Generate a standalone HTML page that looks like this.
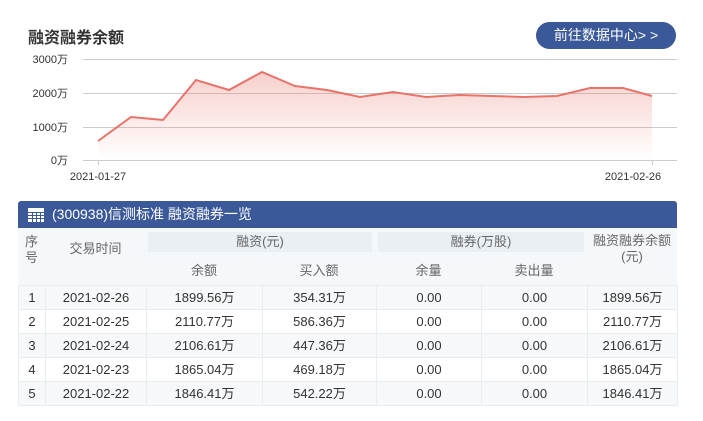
<!DOCTYPE html>
<html><head><meta charset="utf-8"><style>
body{margin:0;width:703px;height:421px;background:#fff;font-family:"Liberation Sans","Noto Sans CJK SC",sans-serif;position:relative;overflow:hidden;color:#333}
.t{position:absolute;left:28px;top:24px;font-size:16px;font-weight:bold;color:#333}
.btn{position:absolute;left:536px;top:22px;width:140px;height:27px;border-radius:14px;background:#3b5998;color:#fff;font-size:14px;line-height:27px;text-align:center}
.bar{position:absolute;left:18px;top:201px;width:659px;height:27px;background:#3b5998;color:#fff;font-size:14px;line-height:27px;border-radius:3px 3px 0 0}
.bar span{position:absolute;left:34px}
.hd{position:absolute;left:18px;top:228px;width:659px;height:57px;background:#f5f8fa;font-size:13px;color:#666}
.hd div{position:absolute;text-align:center;line-height:16px}
table{position:absolute;left:18px;top:285px;width:659px;border-collapse:collapse;font-size:13px;table-layout:fixed}
td{text-align:center;padding:0;height:23px;line-height:23px;border:1px solid #e8edf0;color:#333;overflow:hidden}
tr:nth-child(odd) td{background:#f6f8f9}
tr:nth-child(even) td{background:#fff}
</style></head><body>
<div class="t">融资融券余额</div>
<div class="btn">前往数据中心&gt; &gt;</div>
<svg width="703" height="200" style="position:absolute;left:0;top:0" font-family="Liberation Sans,sans-serif" font-size="11" fill="#333">
<defs><linearGradient id="gr" x1="0" y1="0" x2="0" y2="1"><stop offset="0" stop-color="#e8776b" stop-opacity=".35"/><stop offset="1" stop-color="#e8776b" stop-opacity="0"/></linearGradient></defs>
<g stroke="#ccc" stroke-width="1"><line x1="83" y1="59.5" x2="677" y2="59.5"/><line x1="83" y1="93.5" x2="677" y2="93.5"/><line x1="83" y1="127.5" x2="677" y2="127.5"/><line x1="83" y1="160.5" x2="677" y2="160.5"/><line x1="98.5" y1="160" x2="98.5" y2="165"/><line x1="652.5" y1="160" x2="652.5" y2="165"/></g>
<text x="68" y="63" text-anchor="end">3000万</text><text x="68" y="97" text-anchor="end">2000万</text><text x="68" y="131" text-anchor="end">1000万</text><text x="68" y="164" text-anchor="end">0万</text>
<text x="98" y="180" text-anchor="middle">2021-01-27</text><text x="633" y="180" text-anchor="middle">2021-02-26</text>
<path d="M98,141 L131,117 L163,120 L196,80 L229,90 L262,72 L295,86 L327,90 L360,97 L393,92 L426,97 L459,95 L491,96 L524,97 L557,96 L590,88 L623,88 L652,96 L652,160 L98,160Z" fill="url(#gr)"/>
<path d="M98,141 L131,117 L163,120 L196,80 L229,90 L262,72 L295,86 L327,90 L360,97 L393,92 L426,97 L459,95 L491,96 L524,97 L557,96 L590,88 L623,88 L652,96" fill="none" stroke="#e8736a" stroke-width="2"/>
</svg>
<div class="bar"><svg width="16" height="14" style="position:absolute;left:10px;top:7px"><rect x="0" y="0" width="16" height="14" fill="#fff"/><g stroke="#3b5998" stroke-width="1"><line x1="0" y1="4.5" x2="16" y2="4.5"/><line x1="0" y1="7.5" x2="16" y2="7.5"/><line x1="0" y1="10.5" x2="16" y2="10.5"/><line x1="4.5" y1="4" x2="4.5" y2="14"/><line x1="8.5" y1="4" x2="8.5" y2="14"/><line x1="12.5" y1="4" x2="12.5" y2="14"/></g></svg><span>(300938)信测标准 融资融券一览</span></div>
<div class="hd">
<div style="left:0;width:27px;top:6px">序<br>号</div>
<div style="left:27px;width:101px;top:13px">交易时间</div>
<div style="left:130px;width:224px;top:4px;height:20px;line-height:20px;background:#eaeff4">融资(元)</div>
<div style="left:360px;width:206px;top:4px;height:20px;line-height:20px;background:#eaeff4">融券(万股)</div>
<div style="left:569px;width:90px;top:5px">融资融券余额<br>(元)</div>
<div style="left:128px;width:116px;top:35px">余额</div>
<div style="left:244px;width:114px;top:35px">买入额</div>
<div style="left:358px;width:105px;top:35px">余量</div>
<div style="left:463px;width:106px;top:35px">卖出量</div>
</div>
<table>
<colgroup><col style="width:27px"><col style="width:101px"><col style="width:116px"><col style="width:114px"><col style="width:105px"><col style="width:106px"><col style="width:90px"></colgroup>
<tr><td>1</td><td>2021-02-26</td><td>1899.56万</td><td>354.31万</td><td>0.00</td><td>0.00</td><td>1899.56万</td></tr>
<tr><td>2</td><td>2021-02-25</td><td>2110.77万</td><td>586.36万</td><td>0.00</td><td>0.00</td><td>2110.77万</td></tr>
<tr><td>3</td><td>2021-02-24</td><td>2106.61万</td><td>447.36万</td><td>0.00</td><td>0.00</td><td>2106.61万</td></tr>
<tr><td>4</td><td>2021-02-23</td><td>1865.04万</td><td>469.18万</td><td>0.00</td><td>0.00</td><td>1865.04万</td></tr>
<tr><td>5</td><td>2021-02-22</td><td>1846.41万</td><td>542.22万</td><td>0.00</td><td>0.00</td><td>1846.41万</td></tr>
</table>
</body></html>
